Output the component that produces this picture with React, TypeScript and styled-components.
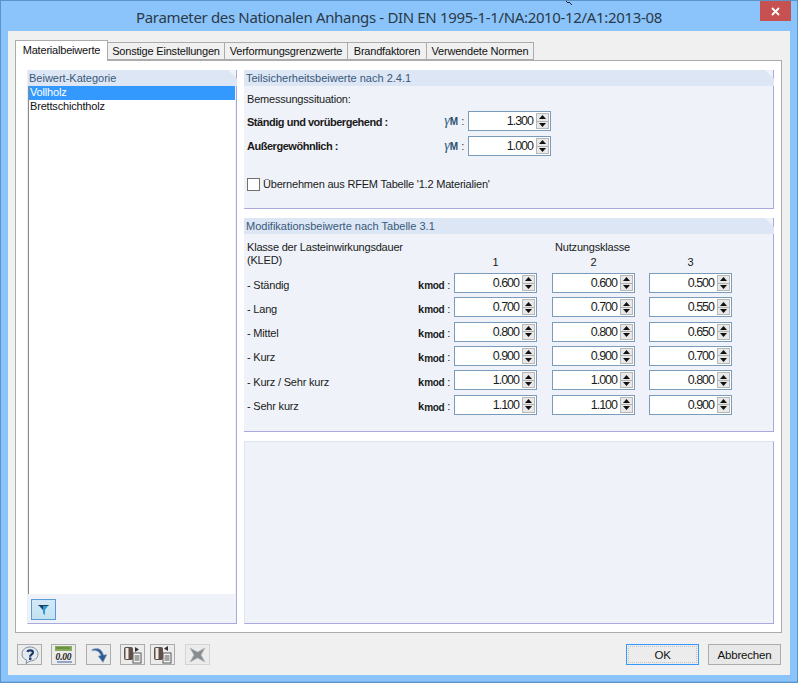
import React from "react";
import styled, { createGlobalStyle } from "styled-components";

const Global = createGlobalStyle`
  html, body { margin: 0; padding: 0; background: #fff; }
  body { font-family: "Liberation Sans", Arial, sans-serif; font-size: 11px; letter-spacing: -0.2px; color: #1a1a1a; }
`;

const Win = styled.div`
  width: 798px; height: 683px; box-sizing: border-box; position: relative;
  background: #8ac4fa; border: 1px solid #5d94c8;
  box-shadow: inset 0 -1px 0 #7ab4ea;
  display: flex; flex-direction: column; padding: 0 7px 7px 7px; overflow: hidden;
`;
const TitleBar = styled.div`height: 30px; display: flex; align-items: center; justify-content: center; position: relative; flex: none;`;
const Title = styled.div`font-family: "Noto Sans", sans-serif; font-size: 15px; letter-spacing: -0.34px; color: #2b3a48; margin-top: 2px;`;
const Close = styled.div`
  position: absolute; right: -1px; top: 0; width: 31px; height: 20px; background: #c75050;
  display: flex; align-items: center; justify-content: center;
`;
const Cursor = styled.svg`position: absolute; left: 563px; top: -1px;`;
const Body = styled.div`
  flex: 1; background: #f0f0f0; padding: 8px 8px 0 7px; display: flex; flex-direction: column; min-height: 0;
`;
const TabRow = styled.div`display: flex; align-items: flex-end; height: 21px; flex: none; position: relative; z-index: 1;`;
const Tab = styled.div<{ $active?: boolean; $w: number }>`
  box-sizing: border-box; width: ${p => p.$w}px; height: ${p => (p.$active ? 21 : 18)}px;
  background: ${p => (p.$active ? "#fff" : "#f0f0f0")};
  border: 1px solid #acacac; border-bottom: ${p => (p.$active ? "none" : "1px solid #acacac")};
  border-left: ${p => (p.$active ? "1px solid #acacac" : "none")};
  display: flex; align-items: center; justify-content: center;
  padding-bottom: ${p => (p.$active ? 3 : 0)}px;
  color: #111; white-space: nowrap;
  margin-bottom: ${p => (p.$active ? -1 : 0)}px;
`;
const Sheet = styled.div`
  flex: 1; background: #fff; border: 1px solid #acacac; box-sizing: border-box; height: 574px;
  padding: 9px 7px 8px 11px; display: flex; gap: 7px; min-height: 0;
`;
const Left = styled.div`
  width: 210px; flex: none; display: flex; flex-direction: column; background: #eff3f9;
  border-right: 1px solid #a9a9e0; border-bottom: 1px solid #a9a9e0; box-sizing: border-box;
  border-left: 1px solid #e8ecf4;
`;
const Head = styled.div<{ $pad?: number }>`
  height: 16px; flex: none; background: #dce6f4; color: #38597a; display: flex; align-items: center;
  padding-left: ${p => p.$pad ?? 2}px; clip-path: polygon(0 0, calc(100% - 9px) 0, 100% 9px, 100% 100%, 0 100%);
  margin-right: -1px; letter-spacing: 0;
`;
const ListBox = styled.div`flex: 1; background: #fff; margin-right: 1px; border-left: 1px solid #8a8a8a;`;
const ListItem = styled.div<{ $sel?: boolean }>`
  height: 14px; line-height: 12px; padding-left: 1px; letter-spacing: -0.18px;
  background: ${p => (p.$sel ? "#3399ff" : "transparent")}; color: ${p => (p.$sel ? "#fff" : "#111")};
`;
const LeftFoot = styled.div`height: 29px; flex: none; padding: 5px 0 0 3px; box-sizing: border-box;`;
const FilterBtn = styled.div`
  width: 25px; height: 21px; box-sizing: border-box; border: 1px solid #5b9bd5;
  background: linear-gradient(#d4e8f8, #c2e2ef); display: flex; align-items: center; justify-content: center;
`;
const Right = styled.div`flex: 1; min-width: 0; display: flex; flex-direction: column; gap: 9px;`;
const Group = styled.div<{ $h: number }>`
  height: ${p => p.$h}px; flex: none; box-sizing: border-box; background: #eff3f9;
  border-right: 1px solid #a9a9e0; border-bottom: 1px solid #a9a9e0; display: flex; flex-direction: column;
`;
const Blank = styled.div`
  flex: 1; background: #eff3f9; box-sizing: border-box;
  border: 1px solid #dfe4f2; border-right-color: #a9a9e0; border-bottom-color: #a9a9e0;
`;
const Content = styled.div`padding: 0 0 0 3px; flex: 1; display: flex; flex-direction: column;`;
const Line = styled.div<{ $top: number; $h?: number }>`
  margin-top: ${p => p.$top}px; height: ${p => p.$h ?? 14}px; line-height: ${p => p.$h ?? 14}px;
  display: flex; align-items: center; white-space: nowrap;
`;
const BoldLabel = styled.span<{ $dy?: number }>`
  font-weight: bold; width: 195px; flex: none; letter-spacing: -0.47px; padding-top: ${p => p.$dy ?? 0}px;
`;
const Sym = styled.span`
  flex: none; display: flex; align-items: center; justify-content: flex-end; padding-right: 4px; box-sizing: border-box;
  font-size: 11px; color: #333; white-space: nowrap; margin-left: -5px; width: 31px;
`;
const Gamma = styled.span`font-family: "Liberation Serif", serif; font-style: italic; font-size: 14px; color: #2c5f80; letter-spacing: 0;`;
const SymSub = styled.span`font-size: 10px; font-weight: bold; color: #2c4f6e; padding-top: 2px; letter-spacing: 0;`;
const Colon = styled.span`font-weight: normal; margin-left: 3px;`;
const Spin = styled.div`
  width: 83px; height: 20px; flex: none; box-sizing: border-box; border: 1px solid #7a9cbc; background: #fff;
  display: flex; align-items: center; justify-content: flex-end; padding: 1px;
`;
const SpinVal = styled.span`padding-right: 3px; font-size: 12.5px; color: #1c1c1c; letter-spacing: -1px;`;
const Arrows = styled.div`width: 13px; height: 16px; flex: none; display: flex; flex-direction: column; border: 1px solid #b8b8b8; box-sizing: border-box; background: #e8e8e8;`;
const ArrowCell = styled.div`flex: 1; display: flex; align-items: center; justify-content: center; &:first-child { border-bottom: 1px solid #b0b0b0; }`;
const Check = styled.div`width: 13px; height: 13px; box-sizing: border-box; border: 1px solid #707070; background: #fff; margin-right: 3px; flex: none;`;
const Table = styled.div`display: flex; flex-direction: column;`;
const HeadRow = styled.div`
  display: grid; grid-template-columns: 207px 83px 15px 83px 14px 83px; margin-top: 6px; height: 33px;
`;
const KledText = styled.div`grid-column: 1; line-height: 13px; padding-top: 1px;`;
const Nutz = styled.div`grid-column: 2 / 7; line-height: 14px; display: grid; grid-template-columns: 83px 15px 83px 14px 83px; align-content: start;`;
const NutzTitle = styled.div`grid-column: 1 / 6; text-align: center; padding-right: 1px;`;
const NutzNum = styled.div<{ $c: number }>`grid-column: ${p => p.$c}; text-align: center; margin-top: 1px;`;
const Row = styled.div`
  display: grid; grid-template-columns: 171px 36px 83px 15px 83px 14px 83px; height: 20px; align-items: center;
  margin-top: 4.33px; &:first-of-type { margin-top: 0; }
`;
const RowLabel = styled.span`padding-top: 3px;`;
const Kmod = styled.span`display: flex; align-items: center; white-space: nowrap; padding-top: 3px;`;
const KLetter = styled.span`font-weight: bold; font-size: 11px; letter-spacing: 0;`;
const KSub = styled.span`font-weight: bold; font-size: 10px; letter-spacing: -0.3px; padding-top: 2px;`;
const Foot = styled.div`height: 42px; flex: none; display: flex; align-items: flex-start; padding-top: 11px; box-sizing: border-box; margin: 0 1px 0 2px;`;
const Tool = styled.div<{ $ml: number; $off?: boolean }>`
  width: 25px; height: 21px; box-sizing: border-box; margin-left: ${p => p.$ml}px; background: #ececec;
  border: 1px solid ${p => (p.$off ? "#d4d4d0" : "#acacac")}; display: flex; align-items: center; justify-content: center; flex: none;
`;
const Btn = styled.div<{ $def?: boolean; $w: number; $ml?: string }>`
  width: ${p => p.$w}px; height: 21px; box-sizing: border-box; margin-left: ${p => p.$ml ?? "0"}; padding-top: 1px;
  border: 1px solid ${p => (p.$def ? "#3399ff" : "#acacac")}; background: ${p => (p.$def ? "#ececec" : "#e8e8e8")};
  outline: ${p => (p.$def ? "1px dotted #c4c4c4" : "none")}; outline-offset: -3px;
  display: flex; align-items: center; justify-content: center; flex: none; color: #111; font-size: 11.5px; letter-spacing: -0.2px;
`;

const Spinner = ({ v }: { v: string }) => (
  <Spin>
    <SpinVal>{v}</SpinVal>
    <Arrows>
      <ArrowCell><svg width="7" height="4"><path d="M3.5 0L7 4H0z" fill="#111" /></svg></ArrowCell>
      <ArrowCell><svg width="7" height="4"><path d="M0 0h7L3.5 4z" fill="#111" /></svg></ArrowCell>
    </Arrows>
  </Spin>
);

const GammaM = () => (
  <Sym><Gamma>γ</Gamma><SymSub>M</SymSub><Colon>:</Colon></Sym>
);

const rows = [
  ["- Ständig", "0.600", "0.600", "0.500"],
  ["- Lang", "0.700", "0.700", "0.550"],
  ["- Mittel", "0.800", "0.800", "0.650"],
  ["- Kurz", "0.900", "0.900", "0.700"],
  ["- Kurz / Sehr kurz", "1.000", "1.000", "0.800"],
  ["- Sehr kurz", "1.100", "1.100", "0.900"],
];

export default function App() {
  return (
    <>
      <Global />
      <Win>
        <TitleBar>
          <Title>Parameter des Nationalen Anhangs - DIN EN 1995-1-1/NA:2010-12/A1:2013-08</Title>
          <Close>
            <svg width="9" height="9" viewBox="0 0 9 9"><path d="M1 1l7 7M8 1L1 8" stroke="#fff" strokeWidth="1.8" /></svg>
          </Close>
        </TitleBar>
        <Cursor width="10" height="6" viewBox="0 0 10 6"><path d="M1 0l3 3 1-1 3 3" stroke="#222" fill="none" strokeWidth="1" /></Cursor>
        <Body>
          <TabRow>
            <Tab $active $w={93}>Materialbeiwerte</Tab>
            <Tab $w={117}>Sonstige Einstellungen</Tab>
            <Tab $w={123}>Verformungsgrenzwerte</Tab>
            <Tab $w={79}>Brandfaktoren</Tab>
            <Tab $w={107}>Verwendete Normen</Tab>
          </TabRow>
          <Sheet>
            <Left>
              <Head $pad={1}>Beiwert-Kategorie</Head>
              <ListBox>
                <ListItem $sel>Vollholz</ListItem>
                <ListItem>Brettschichtholz</ListItem>
              </ListBox>
              <LeftFoot>
                <FilterBtn>
                  <svg width="13" height="12" viewBox="0 0 13 12">
                    <path d="M1.500 1h10L8 6v5L6 9.500V6z" fill="#2d9ad6" />
                    <path d="M1.500 1h4.500L6 9.500V6z" fill="#1d3f5e" />
                    <path d="M1.500 1h10v1h-10z" fill="#20405c" />
                  </svg>
                </FilterBtn>
              </LeftFoot>
            </Left>
            <Right>
              <Group $h={139}>
                <Head>Teilsicherheitsbeiwerte nach 2.4.1</Head>
                <Content>
                  <Line $top={6}>Bemessungssituation:</Line>
                  <Line $top={5} $h={20}>
                    <BoldLabel $dy={2}>Ständig und vorübergehend :</BoldLabel>
                    <GammaM />
                    <Spinner v="1.300" />
                  </Line>
                  <Line $top={5} $h={20}>
                    <BoldLabel>Außergewöhnlich :</BoldLabel>
                    <GammaM />
                    <Spinner v="1.000" />
                  </Line>
                  <Line $top={21}>
                    <Check />Übernehmen aus RFEM Tabelle '1.2 Materialien'
                  </Line>
                </Content>
              </Group>
              <Group $h={214}>
                <Head>Modifikationsbeiwerte nach Tabelle 3.1</Head>
                <Content>
                  <HeadRow>
                    <KledText>Klasse der Lasteinwirkungsdauer<br />(KLED)</KledText>
                    <Nutz>
                      <NutzTitle>Nutzungsklasse</NutzTitle>
                      <NutzNum $c={1}>1</NutzNum>
                      <NutzNum $c={3}>2</NutzNum>
                      <NutzNum $c={5}>3</NutzNum>
                    </Nutz>
                  </HeadRow>
                  <Table>
                    {rows.map(r => (
                      <Row key={r[0]}>
                        <RowLabel>{r[0]}</RowLabel>
                        <Kmod><KLetter>k</KLetter><KSub>mod</KSub><Colon>:</Colon></Kmod>
                        <Spinner v={r[1]} />
                        <span />
                        <Spinner v={r[2]} />
                        <span />
                        <Spinner v={r[3]} />
                      </Row>
                    ))}
                  </Table>
                </Content>
              </Group>
              <Blank />
            </Right>
          </Sheet>
          <Foot>
            <Tool $ml={0}>
              <svg width="20" height="18" viewBox="0 0 20 18">
                <path d="M10 1c4.500 0 8 2.800 8 7s-3.500 7-8 7l-4 2.500.8-3.300C3.800 13.200 2 11 2 8 2 3.800 5.500 1 10 1z" fill="#e4eaf0" stroke="#7f8f9e" />
                <path d="M7.300 5.800C8 4 12.800 3.800 13 6.400c.2 1.800-2.800 2-2.900 4.300" fill="none" stroke="#1c3a66" strokeWidth="2.200" />
                <rect x="9" y="11.500" width="2.400" height="2.400" fill="#1c3a66" />
              </svg>
            </Tool>
            <Tool $ml={9}>
              <svg width="19" height="18" viewBox="0 0 19 18">
                <rect x="1" y="0" width="17" height="5" fill="#86ad5a" />
                <path d="M3 1v2M5 1v2M7 1v2M9 1v2M11 1v2M13 1v2M15 1v2" stroke="#4e7030" />
                <text x="9.500" y="13.500" textAnchor="middle" fontSize="9.500" fontStyle="italic" fontWeight="bold" fontFamily="Liberation Serif" fill="#222">0.00</text>
                <path d="M3 16h15" stroke="#3a5fa8" />
              </svg>
            </Tool>
            <Tool $ml={10}>
              <svg width="20" height="18" viewBox="0 0 20 18">
                <path d="M3 3.500c5-2 10-1 11.500 5.500L18 8.500l-4 8L9 10l2.800-.5C10.500 5.500 7 3.800 3 5z" fill="#2f5c92" stroke="#9fb4cc" strokeWidth=".6" />
              </svg>
            </Tool>
            <Tool $ml={9}>
              <svg width="21" height="18" viewBox="0 0 21 18">
                <rect x="2" y="1" width="9" height="13" rx="2" fill="#5f4f48" />
                <rect x="3.500" y="2" width="3" height="11" fill="#f0ece8" />
                <rect x="11" y="7" width="8" height="10" fill="#f6f6f6" stroke="#555" />
                <path d="M12.500 10h5M12.500 12h5M12.500 14h5" stroke="#555" />
                <path d="M13 1l4 2.500-4 2.500z" fill="#333" />
              </svg>
            </Tool>
            <Tool $ml={5}>
              <svg width="21" height="18" viewBox="0 0 21 18">
                <rect x="2" y="1" width="9" height="13" rx="2" fill="#5f4f48" />
                <rect x="3.500" y="2" width="3" height="11" fill="#f0ece8" />
                <rect x="11" y="7" width="8" height="10" fill="#f6f6f6" stroke="#555" />
                <path d="M12.500 10h5M12.500 12h5M12.500 14h5" stroke="#555" />
                <path d="M16 0l-4 2.500 4 2.500z" fill="#333" />
              </svg>
            </Tool>
            <Tool $ml={10} $off>
              <svg width="19" height="18" viewBox="0 0 19 18">
                <path d="M2 2l7.500 4L17 2l-4 7 4 7-7.500-4L2 16l4-7z" fill="#868b90" stroke="#b4b8bc" strokeWidth=".8" />
              </svg>
            </Tool>
            <Btn $def $w={73} $ml="auto">OK</Btn>
            <Btn $w={73} $ml="9px">Abbrechen</Btn>
          </Foot>
        </Body>
      </Win>
    </>
  );
}
